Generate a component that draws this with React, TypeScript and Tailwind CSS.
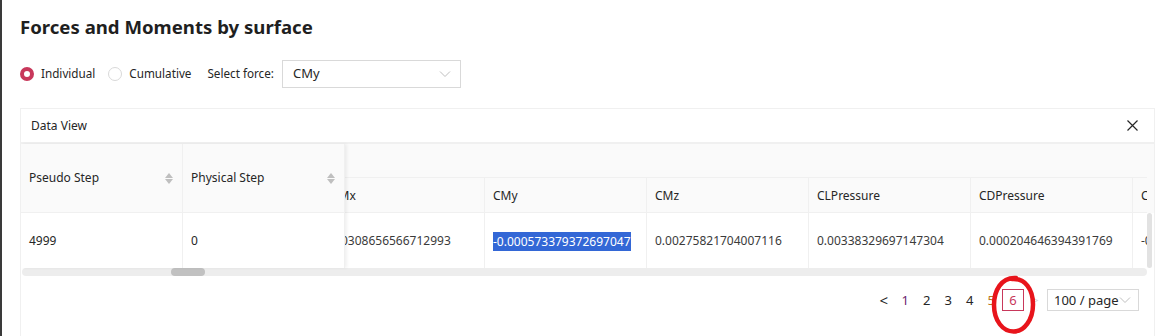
import React from "react";

const cols = [
  { name: "CMx", value: "0.00308656566712993", vp: "pl-[1px]" },
  { name: "CMy", value: "-0.000573379372697047", selected: true, vp: "pl-[8px]" },
  { name: "CMz", value: "0.00275821704007116", vp: "pl-[8px]" },
  { name: "CLPressure", value: "0.00338329697147304", vp: "pl-[8px]" },
  { name: "CDPressure", value: "0.000204646394391769", vp: "pl-[8px]" },
  { name: "CFxPressure", value: "-0.00012345678", vp: "pl-[8px]" },
];

function SortIcon() {
  return (
    <span className="flex flex-col items-center gap-[1px] text-[#bfbfbf]">
      <svg width="8" height="5" viewBox="0 0 8 5">
        <path d="M0 5 L4 0 L8 5 Z" fill="currentColor" />
      </svg>
      <svg width="8" height="5" viewBox="0 0 8 5">
        <path d="M0 0 L4 5 L8 0 Z" fill="currentColor" />
      </svg>
    </span>
  );
}

function Chevron({ className }: { className?: string }) {
  return (
    <svg className={className} width="12" height="8" viewBox="0 0 12 8" fill="none">
      <path d="M1 1.5 L6 6.5 L11 1.5" stroke="currentColor" strokeWidth="1" />
    </svg>
  );
}

export default function App() {
  return (
    <div
      className="w-[1161px] h-[336px] overflow-hidden bg-white border-l-2 border-[#3a3a3a] text-[#262626]"
      style={{ fontFamily: '"Noto Sans", "Open Sans", sans-serif' }}
    >
      <div className="pl-[18px] pr-[6px] pt-[14px]">
        <h1 className="text-[18.6px] leading-[26px] font-bold text-[#1f1f1f]">
          Forces and Moments by surface
        </h1>

        {/* filters */}
        <div className="flex items-center mt-[20px] text-[11.7px] h-[28px]">
          <span className="w-[14px] h-[14px] rounded-full border-[4px] border-[#c8385b] bg-white" />
          <span className="ml-[7px]">Individual</span>
          <span className="ml-[13px] w-[14px] h-[14px] rounded-full border border-[#d9d9d9] bg-white" />
          <span className="ml-[7px]">Cumulative</span>
          <span className="ml-[16px]">Select force:</span>
          <div className="ml-[8px] w-[179px] h-[28px] border border-[#d9d9d9] flex items-center justify-between pl-[10px] pr-[9px]">
            <span className="text-[13px]">CMy</span>
            <Chevron className="text-[#bfbfbf]" />
          </div>
        </div>

        {/* card */}
        <div className="mt-[20px] border border-[#f0f0f0] border-b-0 h-[240px]">
          <div className="h-[35px] flex items-center justify-between pl-[10px] pr-[16px] border-b-2 border-[#f0f0f0]">
            <span className="text-[12px]">Data View</span>
            <svg width="11" height="11" viewBox="0 0 11 11">
              <path d="M0.5 0.5 L10.5 10.5 M10.5 0.5 L0.5 10.5" stroke="#262626" strokeWidth="1.2" />
            </svg>
          </div>

          {/* table */}
          <div className="flex text-[12px]">
            {/* fixed columns */}
            <div className="flex shrink-0 z-10 shadow-[2px_0_3px_rgba(0,0,0,0.06)]">
              {["Pseudo Step", "Physical Step"].map((h, i) => (
                <div key={h} className="w-[162px] border-r border-[#f0f0f0] flex flex-col">
                  <div className="h-[69px] bg-[#fafafa] border-b border-[#f0f0f0] flex items-center justify-between pl-[8px] pr-[9px]">
                    <span>{h}</span>
                    <SortIcon />
                  </div>
                  <div className="h-[55px] flex items-center pl-[8px]">
                    {i === 0 ? "4999" : "0"}
                  </div>
                </div>
              ))}
            </div>

            {/* scrolling columns */}
            <div className="flex-1 overflow-hidden flex">
              <div className="flex-1 overflow-hidden">
                <div className="h-[34px] bg-[#fafafa] border-b border-[#f0f0f0]" />
                <div className="flex -ml-[22px]">
                  {cols.map((c) => (
                    <div key={c.name} className="w-[162px] shrink-0 border-r border-[#f0f0f0] flex flex-col">
                      <div className="h-[35px] bg-[#fafafa] border-b border-[#f0f0f0] flex items-center pt-[1px] pl-[8px]">
                        {c.name}
                      </div>
                      <div className={`h-[55px] flex items-center pt-[1px] whitespace-nowrap text-[#3b3b3b] ${c.vp}`}>
                        {c.selected ? (
                          <span className="bg-[#3367d6] text-white leading-[19px]">{c.value}</span>
                        ) : (
                          c.value
                        )}
                      </div>
                    </div>
                  ))}
                </div>
              </div>
              <div className="w-[7px] shrink-0 flex flex-col">
                <div className="h-[69px] bg-[#fafafa]" />
                <div className="h-[55px] bg-white flex justify-start">
                  <div className="w-[5px] h-[55px] rounded-full bg-[#e2e2e2]" />
                </div>
              </div>
            </div>
          </div>

          {/* horizontal scrollbar */}
          <div className="h-[8px] bg-[#ededed] rounded-[4px] mr-[7px] ml-[1px] flex items-center">
            <div className="ml-[149px] w-[34px] h-[8px] rounded-full bg-[#c1c1c1]" />
          </div>

          {/* pagination */}
          <div className="flex items-center justify-end pr-[15px] mt-[13px] text-[13px]">
            <span className="w-[21.5px] text-center text-[15px]">&lt;</span>
            <span className="w-[21.5px] text-center text-[#6b1d6e]">1</span>
            <span className="w-[21.5px] text-center">2</span>
            <span className="w-[21.5px] text-center">3</span>
            <span className="w-[21.5px] text-center">4</span>
            <span className="w-[21.5px] text-center text-[#b7791f]">5</span>
            <div className="relative">
              <div className="w-[22px] h-[22px] border border-[#c8385b] text-[#c8385b] flex items-center justify-center">
                6
              </div>
              <svg
                className="absolute left-[-11px] top-[-14px] pointer-events-none"
                width="45"
                height="59"
                viewBox="0 0 45 59"
                fill="none"
              >
                <path
                  d="M25 3 C10 2 3 16 3 30 C3 46 12 56.5 22.5 56.5 C33 56.5 42 45 42 29.5 C42 14 34 3 21 4"
                  stroke="#e8141b"
                  strokeWidth="4.5"
                  strokeLinecap="round"
                />
              </svg>
            </div>
            <span className="w-[22px] text-center text-[#d9d9d9]">&gt;</span>
            <div className="ml-[1px] w-[92px] h-[22px] border border-[#d9d9d9] flex items-center justify-between pl-[6px] pr-[7px]">
              <span>100 / page</span>
              <Chevron className="text-[#bfbfbf]" />
            </div>
          </div>
        </div>
      </div>
    </div>
  );
}
